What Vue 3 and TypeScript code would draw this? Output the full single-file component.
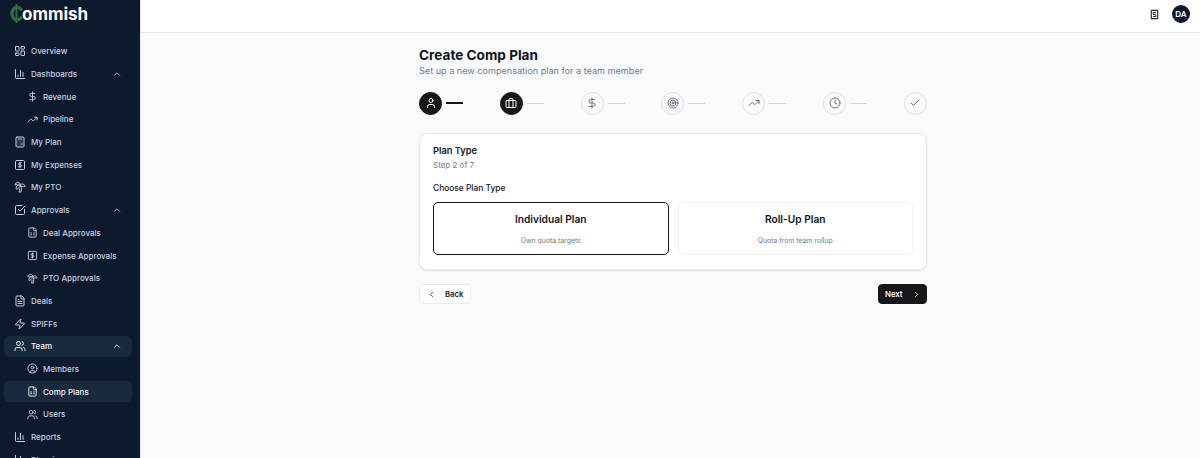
<script setup lang="ts">
interface NavItem {
  label: string
  icon: string
  sub?: boolean
  chevron?: boolean
  open?: boolean
  active?: boolean
}

const icons: Record<string, string> = {
  grid: '<rect x="3" y="3" width="7" height="9" rx="1"/><rect x="14" y="3" width="7" height="5" rx="1"/><rect x="14" y="12" width="7" height="9" rx="1"/><rect x="3" y="16" width="7" height="5" rx="1"/>',
  chart: '<path d="M3 3v16a2 2 0 0 0 2 2h16"/><path d="M8 17v-3"/><path d="M13 17V5"/><path d="M18 17V9"/>',
  dollar: '<line x1="12" x2="12" y1="2" y2="22"/><path d="M17 5H9.5a3.5 3.5 0 0 0 0 7h5a3.5 3.5 0 0 1 0 7H6"/>',
  trend: '<path d="M22 7 13.5 15.5 8.5 10.5 2 17"/><path d="M16 7h6v6"/>',
  calc: '<rect x="4" y="2" width="16" height="20" rx="2"/><line x1="8" x2="16" y1="6" y2="6"/><path d="M16 14v4"/><path d="M8 14h.01"/><path d="M12 14h.01"/><path d="M8 18h.01"/><path d="M12 18h.01"/><path d="M8 10h.01"/><path d="M12 10h.01"/><path d="M16 10h.01"/>',
  receipt: '<rect x="3" y="3" width="18" height="18" rx="2"/><path d="M14.5 8H11a1.8 1.8 0 0 0 0 3.8h2a1.8 1.8 0 0 1 0 3.8H9"/><path d="M12 6.5v11"/>',
  palm: '<path d="M13 8c0-2.76-2.46-5-5.5-5S2 5.240 2 8h2l1-1 1 1h4"/><path d="M13 7.140A5.820 5.820 0 0 1 16.500 6c3.040 0 5.500 2.240 5.500 5h-3l-1-1-1 1h-3"/><path d="M5.890 9.710c-2.150 2.150-2.300 5.470-.350 7.430l4.240-4.250.7-.7.710-.710 2.120-2.120c-1.950-1.960-5.270-1.800-7.420.350"/><path d="M11 15.500c.5 2.500-.17 4.500-1 6.500h4c2-5.500-.5-12-1-14"/>',
  check: '<path d="M21 10.500V19a2 2 0 0 1-2 2H5a2 2 0 0 1-2-2V5a2 2 0 0 1 2-2h11"/><path d="m9 11 3 3L22 4"/>',
  file: '<path d="M15 2H6a2 2 0 0 0-2 2v16a2 2 0 0 0 2 2h12a2 2 0 0 0 2-2V7z"/><path d="M14 2v4a2 2 0 0 0 2 2h4"/><path d="M10 9H8"/><path d="M16 13H8"/><path d="M16 17H8"/>',
  zap: '<path d="M4 14a1 1 0 0 1-.78-1.630l9.900-10.200a.5.5 0 0 1 .860.460l-1.920 6.020A1 1 0 0 0 13 10h7a1 1 0 0 1 .780 1.630l-9.900 10.200a.5.5 0 0 1-.860-.460l1.920-6.020A1 1 0 0 0 11 14z"/>',
  users: '<path d="M16 21v-2a4 4 0 0 0-4-4H6a4 4 0 0 0-4 4v2"/><circle cx="9" cy="7" r="4"/><path d="M22 21v-2a4 4 0 0 0-3-3.870"/><path d="M16 3.130a4 4 0 0 1 0 7.750"/>',
  member: '<circle cx="12" cy="12" r="10"/><circle cx="12" cy="10" r="3"/><path d="M7 20.700V19a2 2 0 0 1 2-2h6a2 2 0 0 1 2 2v1.700"/>',
  plan: '<path d="M15 2H6a2 2 0 0 0-2 2v16a2 2 0 0 0 2 2h12a2 2 0 0 0 2-2V7z"/><path d="M14 2v4a2 2 0 0 0 2 2h4"/><path d="M8 13h2"/><path d="M14 13h2"/><path d="M8 17h2"/><path d="M14 17h2"/>',
  user: '<path d="M19 21v-2a4 4 0 0 0-4-4H9a4 4 0 0 0-4 4v2"/><circle cx="12" cy="7" r="4"/>',
  briefcase: '<rect x="2" y="7" width="20" height="14" rx="2"/><path d="M16 7V5a2 2 0 0 0-2-2h-4a2 2 0 0 0-2 2v2"/><path d="M8 7v14"/><path d="M16 7v14"/>',
  target: '<circle cx="12" cy="12" r="10"/><circle cx="12" cy="12" r="6"/><circle cx="12" cy="12" r="2"/>',
  clock: '<circle cx="12" cy="12" r="10"/><path d="M12 6v6l4 2"/>',
  tick: '<path d="M20 6 9 17l-5-5"/>'
}

const nav: NavItem[] = [
  { label: 'Overview', icon: 'grid' },
  { label: 'Dashboards', icon: 'chart', chevron: true },
  { label: 'Revenue', icon: 'dollar', sub: true },
  { label: 'Pipeline', icon: 'trend', sub: true },
  { label: 'My Plan', icon: 'calc' },
  { label: 'My Expenses', icon: 'receipt' },
  { label: 'My PTO', icon: 'palm' },
  { label: 'Approvals', icon: 'check', chevron: true },
  { label: 'Deal Approvals', icon: 'plan', sub: true },
  { label: 'Expense Approvals', icon: 'receipt', sub: true },
  { label: 'PTO Approvals', icon: 'palm', sub: true },
  { label: 'Deals', icon: 'file' },
  { label: 'SPIFFs', icon: 'zap' },
  { label: 'Team', icon: 'users', chevron: true, open: true },
  { label: 'Members', icon: 'member', sub: true },
  { label: 'Comp Plans', icon: 'plan', sub: true, active: true },
  { label: 'Users', icon: 'users', sub: true },
  { label: 'Reports', icon: 'chart' },
  { label: 'Planning', icon: 'chart' }
]

const steps = [
  { icon: 'user', done: true, line: true },
  { icon: 'briefcase', done: true, line: false },
  { icon: 'dollar', done: false, line: false },
  { icon: 'target', done: false, line: false },
  { icon: 'trend', done: false, line: false },
  { icon: 'clock', done: false, line: false },
  { icon: 'tick', done: false, line: false }
]
</script>

<template>
  <div class="app">
    <aside class="sidebar">
      <div class="logo">
        <svg class="logo-mark" viewBox="0 0 16 24" fill="none">
          <path d="M13.500 6.500A6.500 8 0 1 0 13.500 17.500" stroke="#2f6b45" stroke-width="4.200" />
          <path d="M8 0.500v23" stroke="#2f6b45" stroke-width="2.400" />
        </svg>
        <span>ommish</span>
      </div>
      <nav class="nav">
        <div
          v-for="item in nav"
          :key="item.label"
          class="nav-item"
          :class="{ sub: item.sub, open: item.open, active: item.active }"
        >
          <svg class="nav-icon" viewBox="0 0 24 24" v-html="icons[item.icon]"></svg>
          <span class="nav-label">{{ item.label }}</span>
          <svg v-if="item.chevron" class="nav-chevron" viewBox="0 0 24 24">
            <path d="m18 15-6-6-6 6" />
          </svg>
        </div>
      </nav>
    </aside>

    <div class="main">
      <header class="topbar">
        <svg class="top-icon" viewBox="0 0 24 24">
          <rect x="5" y="3" width="14" height="18" rx="1" />
          <path d="M9 7.500h6M9 16.500h6M9 7.500v3M15 13.500v3M9 12h6" />
        </svg>
        <div class="avatar">DA</div>
      </header>

      <main class="content">
        <div class="wizard">
          <h1>Create Comp Plan</h1>
          <p class="subtitle">Set up a new compensation plan for a team member</p>

          <div class="stepper">
            <div v-for="step in steps" :key="step.icon" class="step">
              <div class="step-circle" :class="{ done: step.done }">
                <svg viewBox="0 0 24 24" v-html="icons[step.icon]"></svg>
              </div>
              <div v-if="step.icon !== 'tick'" class="step-line" :class="{ done: step.line }"></div>
            </div>
          </div>

          <section class="card">
            <h2>Plan Type</h2>
            <p class="step-count">Step 2 of 7</p>
            <div class="field-label">Choose Plan Type</div>
            <div class="options">
              <div class="option selected">
                <div class="option-title">Individual Plan</div>
                <div class="option-text">Own quota targets</div>
              </div>
              <div class="option">
                <div class="option-title">Roll-Up Plan</div>
                <div class="option-text">Quota from team rollup</div>
              </div>
            </div>
          </section>

          <div class="actions">
            <button class="btn back">
              <svg viewBox="0 0 24 24"><path d="m15 18-6-6 6-6" /></svg>
              Back
            </button>
            <button class="btn next">
              Next
              <svg viewBox="0 0 24 24"><path d="m9 18 6-6-6-6" /></svg>
            </button>
          </div>
        </div>
      </main>
    </div>
  </div>
</template>

<style>
html,
body {
  margin: 0;
  overflow: hidden;
}
</style>

<style scoped>
.app {
  display: flex;
  height: 458px;
  overflow: hidden;
  font-family: Inter, "Liberation Sans", sans-serif;
  background: #f9fafc;
}
svg {
  fill: none;
  stroke: currentColor;
  stroke-width: 2;
  stroke-linecap: round;
  stroke-linejoin: round;
}
.sidebar {
  width: 140px;
  flex: none;
  background: #0d1a2d;
  border-right: 1px solid #e6e8ec;
  overflow: hidden;
}
.logo {
  display: flex;
  align-items: center;
  height: 27px;
  padding-left: 10px;
  color: #fff;
  font-size: 17px;
  font-weight: 700;
}
.logo-mark {
  width: 13px;
  height: 19px;
  margin-right: -1px;
}
.nav {
  display: flex;
  flex-direction: column;
  gap: 2px;
  padding: 14px 8px 0 4px;
}
.nav-item {
  display: flex;
  align-items: center;
  flex: none;
  height: 20.700px;
  padding: 0 10px;
  border-radius: 6px;
  color: #c3d0e0;
  font-size: 8px;
  font-weight: 500;
}
.nav-item.sub {
  padding-left: 22.500px;
}
.nav-item.open,
.nav-item.active {
  background: #1a2a3e;
  color: #f1f5f9;
}
.nav-icon {
  width: 12px;
  height: 12px;
  margin-right: 5px;
  flex: none;
}
.sub .nav-icon {
  width: 11px;
  height: 11px;
  margin-right: 5.500px;
}
.nav-label {
  flex: 1;
  white-space: nowrap;
}
.nav-chevron {
  width: 10px;
  height: 10px;
  flex: none;
}
.main {
  flex: 1;
  min-width: 0;
  display: flex;
  flex-direction: column;
}
.topbar {
  display: flex;
  align-items: center;
  justify-content: flex-end;
  gap: 12px;
  flex: none;
  box-sizing: border-box;
  height: 33px;
  padding: 0 10px 4px 0;
  background: #fff;
  border-bottom: 1px solid #e6e8ec;
}
.top-icon {
  width: 11px;
  height: 11px;
  color: #1c2430;
  stroke-width: 2.400;
  stroke-linecap: butt;
  stroke-linejoin: miter;
}
.avatar {
  display: flex;
  align-items: center;
  justify-content: center;
  width: 18px;
  height: 18px;
  border-radius: 50%;
  background: #0d1a2d;
  color: #fff;
  font-size: 8px;
  font-weight: 600;
}
.content {
  display: flex;
  justify-content: center;
  padding: 12px 0 0 5px;
}
.wizard {
  width: 508px;
}
h1 {
  margin: 0;
  color: #11151c;
  font-size: 13.600px;
  line-height: 20px;
  font-weight: 700;
}
.subtitle {
  margin: -1px 0 0;
  color: #737a86;
  font-size: 9.100px;
  line-height: 14px;
}
.stepper {
  display: flex;
  margin-top: 13.500px;
}
.step {
  display: flex;
  align-items: center;
  gap: 4px;
  width: 81px;
}
.step:last-child {
  width: 23px;
}
.step-circle {
  display: flex;
  align-items: center;
  justify-content: center;
  flex: none;
  box-sizing: border-box;
  width: 23px;
  height: 23px;
  border: 1px solid #e0e2e6;
  border-radius: 50%;
  color: #6e7480;
}
.step-circle svg {
  width: 12px;
  height: 12px;
}
.step-circle.done {
  background: #17171b;
  border-color: #17171b;
  color: #fff;
}
.step-line {
  width: 17px;
  height: 1px;
  background: #d0d3d8;
}
.step-line.done {
  height: 1.500px;
  background: #17171b;
}
.card {
  box-sizing: border-box;
  height: 137px;
  margin-top: 18.500px;
  padding: 10px 13px 0;
  background: #fff;
  border: 1px solid #e8eaed;
  border-radius: 8px;
  box-shadow: 0 1px 2px rgba(15, 23, 42, 0.1);
}
h2 {
  margin: 0;
  color: #11151c;
  font-size: 9.250px;
  line-height: 14px;
  font-weight: 600;
}
.step-count {
  margin: 1px 0 0;
  color: #737a86;
  font-size: 8px;
  line-height: 12px;
}
.field-label {
  margin-top: 11px;
  color: #11151c;
  font-size: 8.400px;
  line-height: 12px;
  font-weight: 500;
}
.options {
  display: grid;
  grid-template-columns: 1fr 1fr;
  gap: 9px;
  margin-top: 8px;
}
.option {
  box-sizing: border-box;
  height: 53px;
  padding-top: 8.500px;
  border: 1px solid #f1f2f4;
  border-radius: 5px;
  text-align: center;
}
.option.selected {
  border-color: #17171b;
}
.option-title {
  color: #11151c;
  font-size: 10.200px;
  line-height: 15px;
  font-weight: 600;
}
.option-text {
  margin-top: 9.500px;
  color: #737a86;
  font-size: 6.900px;
  line-height: 10px;
}
.actions {
  display: flex;
  justify-content: space-between;
  margin-top: 14px;
}
.btn {
  display: flex;
  align-items: center;
  height: 20px;
  padding: 0;
  border-radius: 4px;
  font-family: inherit;
  font-size: 7.750px;
  font-weight: 600;
}
.btn svg {
  width: 9px;
  height: 9px;
}
.back {
  box-sizing: border-box;
  width: 52px;
  padding-left: 6.500px;
  gap: 9.500px;
  background: #fff;
  border: 1px solid #e8eaed;
  color: #11151c;
}
.next {
  box-sizing: border-box;
  width: 49px;
  padding-left: 6px;
  gap: 9.500px;
  background: #17171b;
  border: 1px solid #17171b;
  color: #fff;
}
</style>
